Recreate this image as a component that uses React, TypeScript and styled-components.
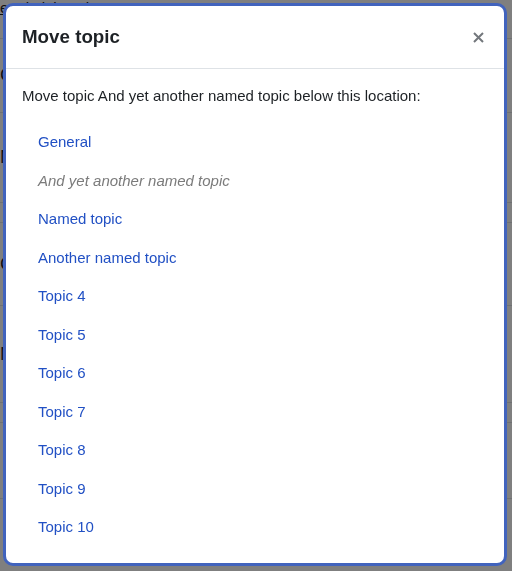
import React from "react";
import styled, { createGlobalStyle } from "styled-components";

const Global = createGlobalStyle`
  html, body { margin: 0; padding: 0; }
  body {
    font-family: "Liberation Sans", Arial, sans-serif;
    background: #ffffff;
    color: #1d2125;
    overflow: hidden;
  }
`;

const Page = styled.div`
  width: 512px;
  height: 571px;
  display: flex;
  flex-direction: column;
  font-size: 15px;
`;

const PageTitle = styled.div`
  line-height: 16px;
  height: 38px;
  border-bottom: 1px solid #dee2e6;
  text-decoration: underline;
`;

const PageRow = styled.div<{ $h: number }>`
  height: ${(p) => p.$h}px;
  border-bottom: 1px solid #dee2e6;
  display: flex;
  align-items: center;
  font-size: 18px;
`;

const Backdrop = styled.div`
  position: fixed;
  inset: 0;
  background: rgba(0, 0, 0, 0.5);
  display: flex;
  padding: 3px 5px 5px 3px;
  box-sizing: border-box;
`;

const Dialog = styled.div`
  flex: 1;
  background: #ffffff;
  border: 3px solid #4163bd;
  border-radius: 10px;
  display: flex;
  flex-direction: column;
  overflow: hidden;
`;

const Header = styled.div`
  display: flex;
  align-items: center;
  justify-content: space-between;
  padding: 20px 16px 19px 16px;
  border-bottom: 1px solid #dee2e6;
`;

const Title = styled.h5`
  margin: 0;
  font-size: 18.75px;
  line-height: 22.5px;
  font-weight: 700;
  color: #1d2125;
`;

const CloseButton = styled.button`
  border: none;
  background: transparent;
  padding: 0;
  width: 14px;
  height: 14px;
  margin-right: 3px;
  display: flex;
  align-items: center;
  justify-content: center;
  cursor: pointer;
`;

const Body = styled.div`
  padding: 16px 16px 16px 16px;
`;

const Intro = styled.p`
  margin: 0 0 16px 0;
  font-size: 15px;
  line-height: 22.5px;
`;

const TopicList = styled.ul`
  list-style: none;
  margin: 0;
  padding: 0 0 0 16px;
`;

const TopicItem = styled.li<{ $current?: boolean }>`
  padding: 8px 0;
  font-size: 15px;
  line-height: 22.5px;
  color: ${(p) => (p.$current ? "#7b7b7b" : "#2150c4")};
  font-style: ${(p) => (p.$current ? "italic" : "normal")};
`;

const topics = [
  { name: "General" },
  { name: "And yet another named topic", current: true },
  { name: "Named topic" },
  { name: "Another named topic" },
  { name: "Topic 4" },
  { name: "Topic 5" },
  { name: "Topic 6" },
  { name: "Topic 7" },
  { name: "Topic 8" },
  { name: "Topic 9" },
  { name: "Topic 10" },
];

export default function App() {
  return (
    <>
      <Global />
      <Page>
        <PageTitle>e administration</PageTitle>
        <PageRow $h={73}>C</PageRow>
        <PageRow $h={89}>ME</PageRow>
        <PageRow $h={19} />
        <PageRow $h={82}>C</PageRow>
        <PageRow $h={96}>ME</PageRow>
        <PageRow $h={19} />
        <PageRow $h={75} />
      </Page>
      <Backdrop>
        <Dialog role="dialog" aria-label="Move topic">
          <Header>
            <Title>Move topic</Title>
            <CloseButton aria-label="Close">
              <svg width="11" height="11" viewBox="0 0 11 11">
                <path
                  d="M1 1 L10 10 M10 1 L1 10"
                  stroke="#73777c"
                  strokeWidth="2"
                  strokeLinecap="butt"
                />
              </svg>
            </CloseButton>
          </Header>
          <Body>
            <Intro>
              Move topic And yet another named topic below this location:
            </Intro>
            <TopicList>
              {topics.map((t) => (
                <TopicItem key={t.name} $current={t.current}>
                  {t.name}
                </TopicItem>
              ))}
            </TopicList>
          </Body>
        </Dialog>
      </Backdrop>
    </>
  );
}
